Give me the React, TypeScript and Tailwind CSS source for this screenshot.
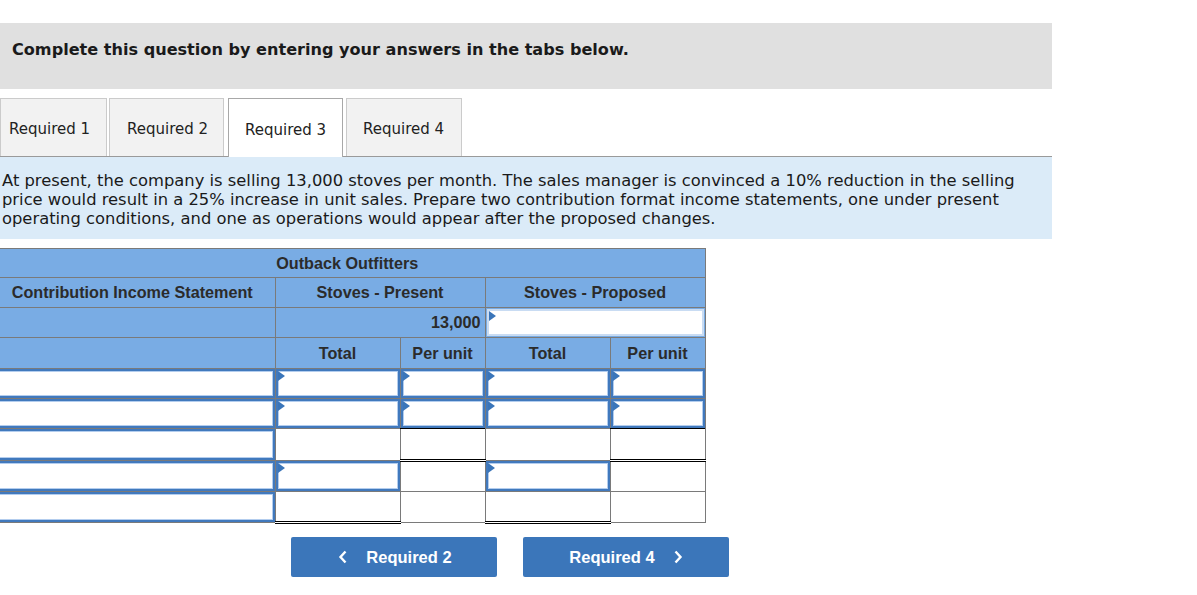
import React from "react";

const Flag = () => (
  <span className="absolute left-0 top-0 h-0 w-0 border-y-[5px] border-l-[7px] border-y-transparent border-l-[#3a75b9]" />
);

const Inp = ({ flag = true }: { flag?: boolean }) => (
  <div className="relative h-full w-full border-2 border-[#4179bd] bg-white shadow-[inset_0_0_0_1px_#b3cdee]">
    {flag && <Flag />}
  </div>
);

export default function App() {
  const hdr = "bg-[#79ace4] border border-[#7a7a7a] text-[#2b2b2b] font-bold text-[16.2px]";
  const tab = "flex h-[58px] items-center border border-b-0 pt-[4px] text-[15px] text-[#222]";
  return (
    <div className="overflow-hidden pt-[23px] font-['DejaVu_Sans',Verdana,sans-serif] text-[#111]">
      <div className="w-[1052px]">
        <div className="h-[66px] bg-[#e0e0e0] pl-[12px] pt-[17px] text-[16.1px] font-bold leading-[20px] text-[#1a1a1a]">
          Complete this question by entering your answers in the tabs below.
        </div>
        <div className="mt-[9px] flex h-[59px] items-end border-b border-[#9a9a9a]">
          <div className={`${tab} w-[107px] border-[#cbcbcb] bg-[#f2f2f2] pl-[8px]`}>Required 1</div>
          <div className={`${tab} ml-[2px] w-[115px] border-[#cbcbcb] bg-[#f2f2f2] pl-[17px]`}>Required 2</div>
          <div className={`${tab} relative top-[1px] ml-[4px] h-[59px] w-[115px] border-[#a8a8a8] bg-white pl-[16px]`}>Required 3</div>
          <div className={`${tab} ml-[3px] w-[116px] border-[#cbcbcb] bg-[#f2f2f2] pl-[16px]`}>Required 4</div>
        </div>
        <div className="h-[82px] bg-[#dbebf8] px-[2px] pt-[14px] text-[16.35px] leading-[19px] text-[#1a1a1a]">
          At present, the company is selling 13,000 stoves per month. The sales manager is convinced a 10% reduction in the selling price would result in a 25% increase in unit sales. Prepare two contribution format income statements, one under present operating conditions, and one as operations would appear after the proposed changes.
        </div>
      </div>
      <table className="ml-[-10px] mt-[9px] table-fixed border-collapse font-['Liberation_Sans',Arial,sans-serif]">
        <colgroup>
          <col className="w-[285px]" />
          <col className="w-[125px]" />
          <col className="w-[85px]" />
          <col className="w-[125px]" />
          <col className="w-[95px]" />
        </colgroup>
        <tbody>
          <tr className="h-[29px]">
            <td colSpan={5} className={`${hdr} border-l-0 text-center`}>Outback Outfitters</td>
          </tr>
          <tr className="h-[30px]">
            <td className={`${hdr} border-l-0 text-center`}>Contribution Income Statement</td>
            <td colSpan={2} className={`${hdr} text-center`}>Stoves - Present</td>
            <td colSpan={2} className={`${hdr} text-center`}>Stoves - Proposed</td>
          </tr>
          <tr className="h-[30px]">
            <td className={`${hdr} border-l-0`}></td>
            <td colSpan={2} className={`${hdr} pr-[4px] text-right`}>13,000</td>
            <td colSpan={2} className={`${hdr} p-0`}>
              <div className="h-[29px] p-[1px]">
                <div className="relative h-full w-full border-2 border-[#c9dcf3] bg-white">
                  <Flag />
                </div>
              </div>
            </td>
          </tr>
          <tr className="h-[31px]">
            <td className={`${hdr} border-l-0`}></td>
            <td className={`${hdr} text-center`}>Total</td>
            <td className={`${hdr} text-center`}>Per unit</td>
            <td className={`${hdr} text-center`}>Total</td>
            <td className={`${hdr} text-center`}>Per unit</td>
          </tr>
          {[0, 1].map((r) => (
            <tr key={r} className="h-[30px]">
              <td className="border border-l-0 border-[#7a7a7a] p-0"><div className="h-[29px]"><Inp flag={false} /></div></td>
              <td className="border border-[#7a7a7a] p-0"><div className="h-[29px]"><Inp /></div></td>
              <td className="border border-[#7a7a7a] p-0"><div className="h-[29px]"><Inp /></div></td>
              <td className="border border-[#7a7a7a] p-0"><div className="h-[29px]"><Inp /></div></td>
              <td className="border border-[#7a7a7a] p-0"><div className="h-[29px]"><Inp /></div></td>
            </tr>
          ))}
          <tr className="h-[32px]">
            <td className="border border-l-0 border-[#7a7a7a] p-0"><div className="h-[31px]"><Inp flag={false} /></div></td>
            <td className="border border-[#7a7a7a] border-t-black p-0"></td>
            <td className="border border-double border-[#7a7a7a] border-t-black border-b-[3px] border-b-black p-0"></td>
            <td className="border border-[#7a7a7a] border-t-black p-0"></td>
            <td className="border border-double border-[#7a7a7a] border-t-black border-b-[3px] border-b-black p-0"></td>
          </tr>
          <tr className="h-[31px]">
            <td className="border border-l-0 border-[#7a7a7a] p-0"><div className="h-[30px]"><Inp flag={false} /></div></td>
            <td className="border border-[#7a7a7a] border-b-black p-0"><div className="h-[30px]"><Inp /></div></td>
            <td className="border border-[#7a7a7a] p-0"></td>
            <td className="border border-[#7a7a7a] border-b-black p-0"><div className="h-[30px]"><Inp /></div></td>
            <td className="border border-[#7a7a7a] p-0"></td>
          </tr>
          <tr className="h-[31px]">
            <td className="border border-l-0 border-[#7a7a7a] p-0"><div className="h-[30px]"><Inp flag={false} /></div></td>
            <td className="border border-double border-[#7a7a7a] border-b-[3px] border-b-black p-0"></td>
            <td className="border border-[#7a7a7a] p-0"></td>
            <td className="border border-double border-[#7a7a7a] border-b-[3px] border-b-black p-0"></td>
            <td className="border border-[#7a7a7a] p-0"></td>
          </tr>
        </tbody>
      </table>
      <div className="mt-[13px] flex gap-[26px] pl-[291px] font-['Liberation_Sans',Arial,sans-serif]">
        <div className="flex h-[40px] w-[206px] items-center justify-center gap-[18px] rounded-[2px] bg-[#3b76ba] pl-[2px] text-[16.5px] font-bold text-white">
          <svg width="10" height="14" viewBox="0 0 10 14"><path d="M7.5 1.5 2.5 7l5 5.5" fill="none" stroke="white" strokeWidth="2.4" /></svg>
          <span>Required 2</span>
        </div>
        <div className="flex h-[40px] w-[206px] items-center justify-center gap-[18px] rounded-[2px] bg-[#3b76ba] text-[16.5px] font-bold text-white">
          <span>Required 4</span>
          <svg width="10" height="14" viewBox="0 0 10 14"><path d="M2.5 1.5 7.5 7l-5 5.5" fill="none" stroke="white" strokeWidth="2.4" /></svg>
        </div>
      </div>
    </div>
  );
}
